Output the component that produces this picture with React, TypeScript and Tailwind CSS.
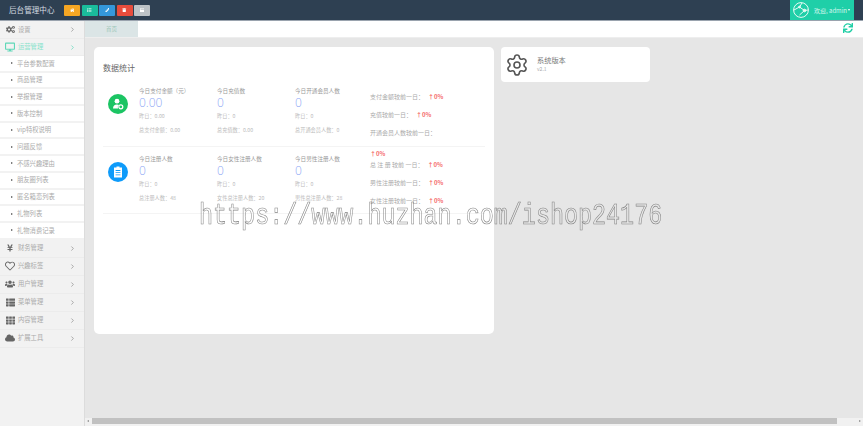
import { ChevronRight, Settings } from "lucide-react"
import {
  FaCloud,
  FaCogs,
  FaDesktop,
  FaHome,
  FaList,
  FaPencilAlt,
  FaRegHeart,
  FaSync,
  FaTh,
  FaThList,
  FaTrash,
  FaUsers,
  FaWindowMaximize,
  FaYenSign,
} from "react-icons/fa"
import type { ReactNode } from "react"

const topButtons = [
  { color: "bg-[#f5a623]", icon: <FaHome /> },
  { color: "bg-[#1abc9c]", icon: <FaList /> },
  { color: "bg-[#3498db]", icon: <FaPencilAlt /> },
  { color: "bg-[#e74c3c]", icon: <FaTrash /> },
  { color: "bg-[#bdc3c7]", icon: <FaWindowMaximize /> },
]

const subItems = [
  "平台参数配置",
  "商品管理",
  "举报管理",
  "版本控制",
  "vip特权说明",
  "问题反馈",
  "不感兴趣理由",
  "朋友圈列表",
  "匿名箱恋列表",
  "礼物列表",
  "礼物消费记录",
]

const bottomMenus = [
  { label: "财务管理", icon: <FaYenSign className="text-[8px]" /> },
  { label: "兴趣标签", icon: <FaRegHeart className="text-[10px]" /> },
  { label: "用户管理", icon: <FaUsers className="text-[10px]" /> },
  { label: "菜单管理", icon: <FaThList className="text-[9px]" /> },
  { label: "内容管理", icon: <FaTh className="text-[9px]" /> },
  { label: "扩展工具", icon: <FaCloud className="text-[10px]" /> },
]

function MenuRow({ icon, label, active, short }: { icon: ReactNode; label: string; active?: boolean; short?: boolean }) {
  return (
    <div
      className={`flex items-center border-b border-[#ececec] pl-[3px] pr-[8px] ${short ? "h-[17px]" : "h-[18px]"} ${
        active ? "text-[#5fd8b8]" : "text-[#666]"
      }`}
    >
      <span className="flex w-[14px] justify-center">{icon}</span>
      <span className={`ml-[1px] flex-1 text-[6.3px] ${active ? "text-[#86e2cb]" : "text-[#aaa]"}`}>{label}</span>
      <ChevronRight size={7} strokeWidth={2} className={active ? "text-[#3fd0ac]" : "text-[#777]"} />
    </div>
  )
}

function Stat(props: { title: string; value: string; yesterday: string; total: string }) {
  return (
    <div className="w-[78px]">
      <div className="text-[5.6px] leading-[8px] text-[#999]">{props.title}</div>
      <div className="mt-[1px] h-[14px] font-['Open_Sans',sans-serif] text-[12px] font-light leading-[14px] text-[#8fa9f5]">
        {props.value}
      </div>
      <div className="mt-[2px] text-[5.2px] leading-[8px] text-[#bbb]">{props.yesterday}</div>
      <div className="mt-[6px] whitespace-nowrap text-[5.2px] leading-[8px] text-[#bbb]">{props.total}</div>
    </div>
  )
}

function Up({ flush }: { flush?: boolean }) {
  return (
    <span className={`whitespace-nowrap text-[6px] font-bold text-[#f56c6c] ${flush ? "" : "ml-[4px]"}`}>↑0%</span>
  )
}

function Compare({ label }: { label: string }) {
  return (
    <div className="flex h-[18px] items-center text-[6px] text-[#aaa]">
      <span className="whitespace-nowrap">{label}</span>
      <Up />
    </div>
  )
}

export default function App() {
  return (
    <div className="relative flex h-[426px] w-[863px] flex-col overflow-hidden bg-[#e6e6e6] font-['Noto_Sans_CJK_SC','Liberation_Sans',sans-serif]">
      {/* top bar */}
      <header className="flex h-[21px] shrink-0 items-stretch border-b border-[#9aa3ae] bg-[#2e4052]">
        <div className="ml-[9px] flex w-[55px] items-center text-[7.6px] text-[#d5dbe0]">后台管理中心</div>
        <div className="flex items-center gap-[1.5px]">
          {topButtons.map((b, i) => (
            <div
              key={i}
              className={`flex h-[11px] w-[16px] items-center justify-center rounded-[1px] text-[4.5px] text-white ${b.color}`}
            >
              {b.icon}
            </div>
          ))}
        </div>
        <div className="ml-auto mr-[9px] flex h-[20px] w-[64px] items-center bg-[#1fcfa8] pl-[3px] text-white">
          <svg width="16" height="16" viewBox="0 0 16 16" fill="none" stroke="#e8fbf6" strokeWidth="1">
            <circle cx="8" cy="8" r="7.4" />
            <path d="M1 8 L6.5 5 L11.5 8.5 L6.5 13 M6.5 5 L9 1 M11.5 8.5 L15 8" />
            <circle cx="11.5" cy="8.5" r="1.3" fill="#e8fbf6" />
            <circle cx="6.5" cy="5" r="0.9" fill="#e8fbf6" />
          </svg>
          <span className="ml-[5px] whitespace-nowrap text-[6px] text-[#d8f7ef]">欢迎, admin</span>
          <span className="ml-[1px] h-0 w-0 border-x-[1.5px] border-t-[2px] border-x-transparent border-t-white" />
        </div>
      </header>

      <div className="flex min-h-0 flex-1">
        {/* sidebar */}
        <aside className="w-[85px] shrink-0 border-r border-[#dcdcdc] bg-[#f2f2f2]">
          <MenuRow icon={<FaCogs className="text-[9px]" />} label="设置" />
          <MenuRow short active icon={<FaDesktop className="text-[10px] text-[#5fd8b8]" />} label="运营管理" />
          {subItems.map((s) => (
            <div
              key={s}
              className="flex h-[16.7px] items-center border-b-2 border-[#f2f2f2] bg-white pl-[11px] text-[6.3px] text-[#aaa]"
            >
              <span className="mr-[4px] h-0 w-0 border-y-[1.5px] border-l-[2px] border-y-transparent border-l-[#555]" />
              {s}
            </div>
          ))}
          {bottomMenus.map((m) => (
            <MenuRow key={m.label} icon={m.icon} label={m.label} />
          ))}
        </aside>

        <main className="flex min-w-0 flex-1 flex-col">
          {/* tabs */}
          <div className="flex h-[17px] shrink-0 items-stretch border-b border-[#eee] bg-white">
            <div className="flex w-[53px] items-center justify-center bg-[#dbe5e6] text-[5.5px] text-[#9cc5b8]">
              首页
            </div>
            <FaSync className="ml-auto mr-[10px] mt-[2px] text-[10px] text-[#22cfa6]" />
          </div>

          {/* content */}
          <div className="flex flex-1 items-start gap-[7px] pl-[9px] pt-[9px]">
            <section className="h-[287px] w-[400px] rounded-[5px] bg-white px-[9px]">
              <h2 className="mt-[15px] text-[8px] leading-[12px] text-[#666]">数据统计</h2>
              <div className="mt-[13px] flex h-[60px] border-b border-[#f4f4f4]">
                <div className="ml-[5px] mt-[7px] flex h-[20px] w-[20px] items-center justify-center rounded-full bg-[#1bc463]">
                  <svg width="12" height="12" viewBox="0 0 12 12" fill="white">
                    <circle cx="5" cy="3.2" r="2.4" />
                    <path d="M1 10.5c0-2.6 1.6-4 4-4 .8 0 1.4.2 2 .5a3 3 0 0 0-1 3.5z" />
                    <circle cx="8.8" cy="8.8" r="2" fill="none" stroke="white" strokeWidth="1.2" />
                  </svg>
                </div>
                <div className="ml-[11px] flex">
                  <Stat title="今日支付金额（元）" value="0.00" yesterday="昨日：0.00" total="总支付金额：0.00" />
                  <Stat title="今日充值数" value="0" yesterday="昨日：0" total="总充值数：0.00" />
                  <Stat title="今日开通会员人数" value="0" yesterday="昨日：0" total="总开通会员人数：0" />
                </div>
                <div className="ml-[-3px] w-[110px]">
                  <Compare label="支付金额较前一日：" />
                  <Compare label="充值较前一日：" />
                  <div className="flex h-[18px] items-center whitespace-nowrap text-[6px] text-[#aaa]">
                    开通会员人数较前一日：
                  </div>
                  <div className="mt-[4px] h-[9px] leading-[9px]">
                    <Up flush />
                  </div>
                </div>
              </div>
              <div className="flex h-[67px] border-b border-[#f4f4f4] pt-[8px]">
                <div className="ml-[5px] mt-[7px] flex h-[20px] w-[20px] items-center justify-center rounded-full bg-[#0e9bfa]">
                  <svg width="10" height="12" viewBox="0 0 10 12" fill="white">
                    <path
                      d="M1 1.5h2.5V.5h3v1H9v10H1zM2.6 4v.9h4.8V4zm0 2.2v.9h4.8v-.9zm0 2.2v.9h4.8v-.9z"
                      fillRule="evenodd"
                    />
                  </svg>
                </div>
                <div className="ml-[11px] flex">
                  <Stat title="今日注册人数" value="0" yesterday="昨日：0" total="总注册人数：48" />
                  <Stat title="今日女性注册人数" value="0" yesterday="昨日：0" total="女性总注册人数：20" />
                  <Stat title="今日男性注册人数" value="0" yesterday="昨日：0" total="男性总注册人数：28" />
                </div>
                <div className="ml-[-3px] w-[110px]">
                  <Compare label="总 注 册 较前 一日：" />
                  <Compare label="男性注册较前一日：" />
                  <Compare label="女性注册较前一日：" />
                </div>
              </div>
            </section>

            <section className="flex h-[35px] w-[149px] items-center rounded-[4px] bg-white pl-[4px]">
              <Settings size={24} strokeWidth={1.6} className="text-[#555]" />
              <div className="ml-[8px] -mt-[2px]">
                <div className="text-[7.2px] leading-[10px] text-[#777]">系统版本</div>
                <div className="text-[5px] leading-[8px] text-[#aaa]">v2.1</div>
              </div>
            </section>
          </div>

          {/* horizontal scrollbar */}
          <div className="flex h-[8px] shrink-0 items-start bg-[#f1f1f1]">
            <span className="ml-[2px] mt-[1.5px] h-0 w-0 border-y-[1.5px] border-r-[2px] border-y-transparent border-r-[#888]" />
            <div className="ml-[3px] h-[6px] w-[745px] bg-[#c1c1c1]" />
            <span className="ml-auto mr-[2px] mt-[1.5px] h-0 w-0 border-y-[1.5px] border-l-[2px] border-y-transparent border-l-[#888]" />
          </div>
        </main>
      </div>

      {/* watermark */}
      <div className="pointer-events-none absolute left-[199px] top-[202px] origin-top scale-y-[1.28] whitespace-nowrap font-['Liberation_Mono',monospace] text-[23.4px] leading-[22px] text-transparent opacity-90 [will-change:transform] [-webkit-text-stroke:0.5px_#777]">
        https://www.huzhan.com/ishop24176
      </div>
    </div>
  )
}
